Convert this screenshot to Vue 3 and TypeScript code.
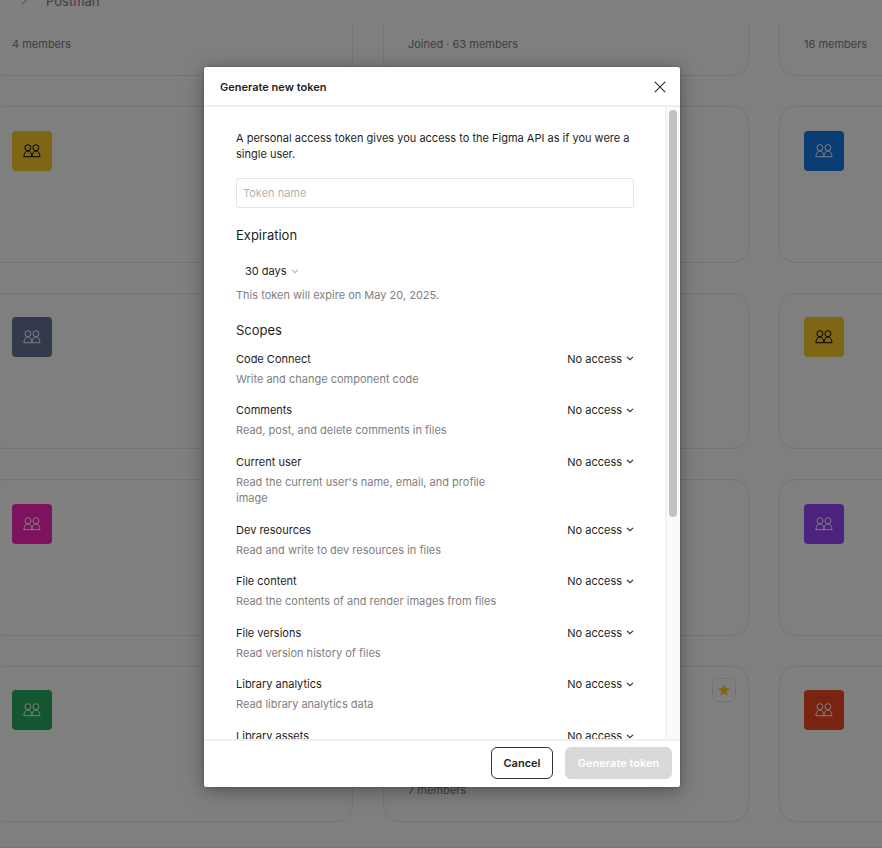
<script setup lang="ts">
interface Team {
  color?: string
  dark?: boolean
  meta?: string
  starred?: boolean
}

interface Scope {
  name: string
  detail: string
}

const teams: Team[] = [
  { meta: '4 members' },
  { meta: 'Joined · 63 members' },
  { meta: '16 members' },
  { color: '#ffcc29', dark: true },
  {},
  { color: '#147ae4' },
  { color: '#69759b' },
  {},
  { color: '#ffcc29', dark: true },
  { color: '#ff24bd' },
  {},
  { color: '#9747ff' },
  { color: '#24ae5f' },
  { meta: '7 members', starred: true },
  { color: '#f24822' },
]

const scopes: Scope[] = [
  { name: 'Code Connect', detail: 'Write and change component code' },
  { name: 'Comments', detail: 'Read, post, and delete comments in files' },
  { name: 'Current user', detail: "Read the current user's name, email, and profile image" },
  { name: 'Dev resources', detail: 'Read and write to dev resources in files' },
  { name: 'File content', detail: 'Read the contents of and render images from files' },
  { name: 'File versions', detail: 'Read version history of files' },
  { name: 'Library analytics', detail: 'Read library analytics data' },
  { name: 'Library assets', detail: 'Read data of individual published components and styles' },
]
</script>

<template>
  <div class="page">
    <header class="crumbs">
      <svg class="crumb-arrow" width="6" height="10" viewBox="0 0 6 10">
        <path d="M1 .5 5.2 5 1 9.5" />
      </svg>
      <span>Postman</span>
    </header>

    <main class="board">
      <div class="grid">
        <article v-for="(team, i) in teams" :key="i" class="card">
          <div v-if="team.color" class="tile" :class="{ dark: team.dark }" :style="{ background: team.color }">
            <svg width="18" height="14" viewBox="0 0 18 14">
              <circle cx="4.9" cy="3.7" r="3" />
              <circle cx="12.9" cy="3.7" r="3" />
              <path d="M.9 12.7C.9 9.4 2.4 7 4.9 7s4 2.4 4 5.7z" />
              <path d="M8.9 12.7c0-3.3 1.5-5.7 4-5.7s4 2.4 4 5.7z" />
            </svg>
          </div>
          <span v-if="team.starred" class="star">
            <svg width="12" height="12" viewBox="0 0 12 12">
              <path d="M6 .9 7.5 4.3l3.6.4-2.7 2.5.8 3.6L6 8.9l-3.2 1.9.8-3.6L.9 4.7l3.6-.4z" />
            </svg>
          </span>
          <p v-if="team.meta" class="meta">{{ team.meta }}</p>
        </article>
      </div>
    </main>

    <div class="overlay">
      <section class="dialog" role="dialog">
        <header class="head">
          <h1>Generate new token</h1>
          <svg class="close" width="12" height="12" viewBox="0 0 12 12">
            <path d="M.8.8l10.4 10.4M11.2.8.8 11.2" />
          </svg>
        </header>

        <div class="body">
          <div class="content">
            <p class="intro">A personal access token gives you access to the Figma API as if you were a single user.</p>
            <input class="field" type="text" placeholder="Token name" />
            <h2 class="expiration">Expiration</h2>
            <div class="days">
              <span>30 days</span>
              <svg class="chevron pale" width="8" height="5" viewBox="0 0 8 5"><path d="M1 .8l3 2.9 3-2.9" /></svg>
            </div>
            <p class="note">This token will expire on May 20, 2025.</p>
            <h2 class="scopes">Scopes</h2>
            <ul class="list">
              <li v-for="scope in scopes" :key="scope.name">
                <div class="scope">
                  <p>{{ scope.name }}</p>
                  <p class="detail">{{ scope.detail }}</p>
                </div>
                <div class="access">
                  <span>No access</span>
                  <svg class="chevron" width="8" height="5" viewBox="0 0 8 5"><path d="M1 .8l3 2.9 3-2.9" /></svg>
                </div>
              </li>
            </ul>
          </div>
          <div class="track"><div class="thumb"></div></div>
        </div>

        <footer class="foot">
          <button class="cancel" type="button">Cancel</button>
          <button class="submit" type="button" disabled>Generate token</button>
        </footer>
      </section>
    </div>
  </div>
</template>

<style>
body {
  margin: 0;
}
</style>

<style scoped>
* {
  box-sizing: border-box;
}

h1,
h2,
p,
ul {
  margin: 0;
  padding: 0;
  font-weight: 400;
}

.page {
  position: relative;
  display: flex;
  flex-direction: column;
  height: 848px;
  overflow: hidden;
  background: #fff;
  color: #1e1e1e;
  font: 11px/16px Inter, "Liberation Sans", sans-serif;
}

svg {
  display: block;
  flex: none;
  fill: none;
}

.crumbs {
  flex: none;
  display: flex;
  align-items: flex-start;
  gap: 19.5px;
  height: 24px;
  padding-left: 20.5px;
  overflow: hidden;
  font-size: 13px;
  line-height: 20px;
  color: #808080;
}

.crumbs span {
  margin-top: -9px;
}

.crumb-arrow {
  margin-top: -5px;
  stroke: #909090;
}

.board {
  flex: 1;
  min-height: 0;
  overflow: hidden;
  border-bottom: 1px solid #efefef;
}

.grid {
  display: grid;
  grid-template-columns: repeat(3, 366px);
  grid-auto-rows: 156.6px;
  gap: 30px;
  margin: -104.5px 0 0 -13px;
}

.card {
  position: relative;
  display: flex;
  flex-direction: column;
  padding: 23.5px 24px;
  border: 1px solid #e8e8e8;
  border-radius: 16px;
}

.tile {
  display: flex;
  align-items: center;
  justify-content: center;
  width: 40px;
  height: 40px;
  border-radius: 4px;
}

.tile svg {
  margin-left: 0.5px;
  stroke: #fff;
}

.tile.dark svg {
  stroke: #000;
}

.meta {
  margin-top: auto;
  color: #808080;
}

.star {
  position: absolute;
  top: 11px;
  right: 12px;
  display: flex;
  align-items: center;
  justify-content: center;
  width: 24px;
  height: 24px;
  border: 1px solid #e4e4e4;
  border-radius: 6px;
}

.star path {
  fill: #ffcc29;
  stroke: #ffcc29;
  stroke-width: 0.8;
  stroke-linejoin: round;
}

.overlay {
  position: absolute;
  inset: 0;
  display: flex;
  justify-content: center;
  align-items: flex-start;
  padding-top: 67px;
  padding-left: 2px;
  background: rgba(0, 0, 0, 0.5);
}

.dialog {
  display: flex;
  flex-direction: column;
  width: 476px;
  height: 720px;
  overflow: hidden;
  border-radius: 2px;
  background: #fff;
  box-shadow: 0 2px 14px rgba(0, 0, 0, 0.2), 0 5px 24px rgba(0, 0, 0, 0.2), 0 0 0 0.5px rgba(0, 0, 0, 0.15);
}

.head {
  flex: none;
  display: flex;
  align-items: center;
  justify-content: space-between;
  height: 40px;
  padding: 1px 14px 0 16px;
  border-bottom: 2px solid #f0f0f0;
}

.head h1 {
  font-size: 11px;
  font-weight: 575;
}

.close path {
  stroke: #2c2c2c;
  stroke-width: 1.1;
}

.body {
  flex: 1;
  display: flex;
  min-height: 0;
  overflow: hidden;
}

.content {
  flex: 1;
  padding: 23px 31px 0 32px;
}

.field {
  display: block;
  width: 398px;
  height: 30px;
  margin-top: 16px;
  padding: 0 6px;
  border: 1px solid #e6e6e6;
  border-radius: 2px;
  outline: none;
  background: #fff;
  font: inherit;
}

.field::placeholder {
  color: #b3b3b3;
  opacity: 1;
}

h2 {
  font-size: 13px;
  line-height: 20px;
}

.expiration {
  margin-top: 17px;
}

.days {
  display: flex;
  align-items: center;
  gap: 4px;
  margin: 18px 0 8px 9px;
}

.note,
.detail {
  color: #808080;
}

.scopes {
  margin: 17px 0 10.6px;
}

.list {
  display: flex;
  flex-direction: column;
  gap: 15.65px;
  list-style: none;
}

.list li {
  display: flex;
  align-items: flex-start;
  justify-content: space-between;
}

.scope {
  width: 270px;
}

.detail {
  margin-top: 4px;
}

.access {
  display: flex;
  align-items: center;
  gap: 4px;
}

.chevron path {
  stroke: #2c2c2c;
  stroke-width: 1.1;
}

.chevron.pale path {
  stroke: #b3b3b3;
}

.track {
  flex: none;
  width: 15px;
  padding: 2.5px 0 0 2.3px;
  border-left: 2px solid #f1f1f1;
  background: #fafafa;
}

.thumb {
  width: 8px;
  height: 407px;
  border-radius: 4px;
  background: #c1c1c1;
}

.foot {
  flex: none;
  display: flex;
  align-items: flex-start;
  justify-content: flex-end;
  gap: 12px;
  height: 48px;
  padding: 6.4px 8px 0 0;
  border-top: 2px solid #f0f0f0;
}

button {
  height: 32px;
  padding: 0;
  border: 1px solid #333;
  border-radius: 6px;
  background: #fff;
  color: #1e1e1e;
  font: 600 11px/16px Inter, "Liberation Sans", sans-serif;
  white-space: nowrap;
}

.cancel {
  width: 62px;
}

.submit {
  width: 107px;
  border-color: #d9d9d9;
  background: #d9d9d9;
  color: #fff;
}
</style>
